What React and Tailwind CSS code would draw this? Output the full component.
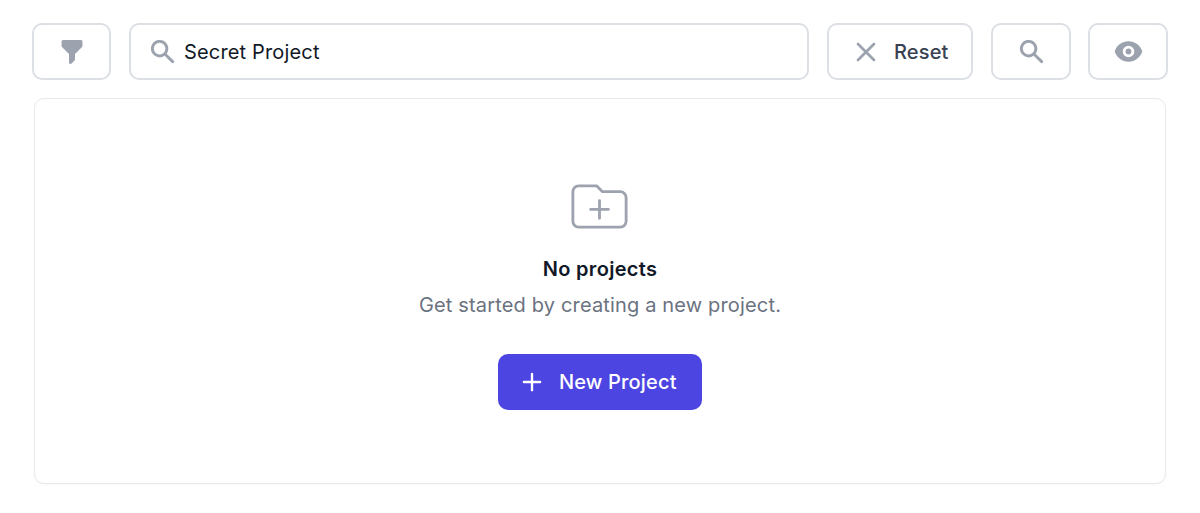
import { Plus, X } from 'lucide-react';

const iconButton = 'flex h-[57px] w-[80px] shrink-0 items-center justify-center rounded-[10px] border-2 border-[#dcdfe4] bg-white';

function FilterIcon() {
  return (
    <svg viewBox="0 0 20 20" fill="currentColor" className="h-[30px] w-[30px] text-[#9ca3af]">
      <path d="M3 3a1 1 0 011-1h12a1 1 0 011 1v3a1 1 0 01-.293.707L12 11.414V15a1 1 0 01-.293.707l-2 2A1 1 0 018 17v-5.586L3.293 6.707A1 1 0 013 6V3z" />
    </svg>
  );
}

function SearchIcon() {
  return (
    <svg viewBox="0 0 20 20" fill="currentColor" className="h-[29px] w-[29px] text-[#9ca3af]">
      <path fillRule="evenodd" clipRule="evenodd" d="M8 4a4 4 0 100 8 4 4 0 000-8zM2 8a6 6 0 1110.89 3.476l4.817 4.817a1 1 0 01-1.414 1.414l-4.816-4.816A6 6 0 012 8z" />
    </svg>
  );
}

function EyeIcon() {
  return (
    <svg viewBox="0 0 20 20" fill="currentColor" className="h-[29px] w-[29px] text-[#9ca3af]">
      <path d="M10 12a2 2 0 100-4 2 2 0 000 4z" />
      <path fillRule="evenodd" clipRule="evenodd" d="M.458 10C1.732 5.943 5.522 3 10 3s8.268 2.943 9.542 7c-1.274 4.057-5.064 7-9.542 7S1.732 14.057.458 10zM14 10a4 4 0 11-8 0 4 4 0 018 0z" />
    </svg>
  );
}

function FolderPlusIcon() {
  return (
    <svg viewBox="0 0 24 24" fill="none" stroke="currentColor" strokeWidth="0.95" strokeLinecap="round" strokeLinejoin="round" className="mr-[1px] h-[71px] w-[71px] text-[#9ca3af]">
      <path d="M9 13h6m-3-3v6m-9 1V7a2 2 0 012-2h6l2 2h6a2 2 0 012 2v8a2 2 0 01-2 2H5a2 2 0 01-2-2z" />
    </svg>
  );
}

export default function App() {
  return (
    <div className="h-[513px] w-[1200px] bg-white pl-8 pr-8 pt-[23px] font-['Inter',sans-serif] tracking-[0.16px]">
      {/* toolbar */}
      <div className="flex gap-[18px]">
        <button className="flex h-[57px] w-[79px] shrink-0 items-center justify-center rounded-[10px] border-2 border-[#dcdfe4] bg-white"><FilterIcon /></button>
        <div className="flex h-[57px] flex-1 items-center gap-[7px] rounded-[10px] border-2 border-[#dcdfe4] bg-white pl-[17px]">
          <SearchIcon />
          <span className="text-[20px] text-[#111827]">Secret Project</span>
        </div>
        <button className="flex h-[57px] w-[146px] shrink-0 items-center gap-[12px] rounded-[10px] border-2 border-[#dcdfe4] bg-white pl-[21px] text-[20px] font-medium text-[#374151]">
          <X className="h-8 w-8 text-[#9ca3af]" strokeWidth={2} />
          Reset
        </button>
        <button className={iconButton}><SearchIcon /></button>
        <button className={`${iconButton} -ml-px`}><EyeIcon /></button>
      </div>

      {/* empty state */}
      <div className="mx-[2px] mt-[18px] flex h-[386px] flex-col items-center rounded-[10px] border border-[#e8e9ec] bg-white pt-[72px] shadow-[0_1px_2px_rgba(0,0,0,0.03)]">
        <FolderPlusIcon />
        <h3 className="mt-[13px] text-[20px] font-semibold leading-[28px] tracking-[0.3px] text-[#111827]">No projects</h3>
        <p className="mt-[8px] text-[20px] leading-[28px] text-[#6b7280]">Get started by creating a new project.</p>
        <button className="mt-[35px] flex h-[56px] w-[204px] items-center gap-[13px] rounded-[10px] bg-[#4d45e2] pl-[20px] text-[20px] font-medium text-white">
          <Plus className="h-7 w-7" strokeWidth={2} />
          New Project
        </button>
      </div>
    </div>
  );
}
